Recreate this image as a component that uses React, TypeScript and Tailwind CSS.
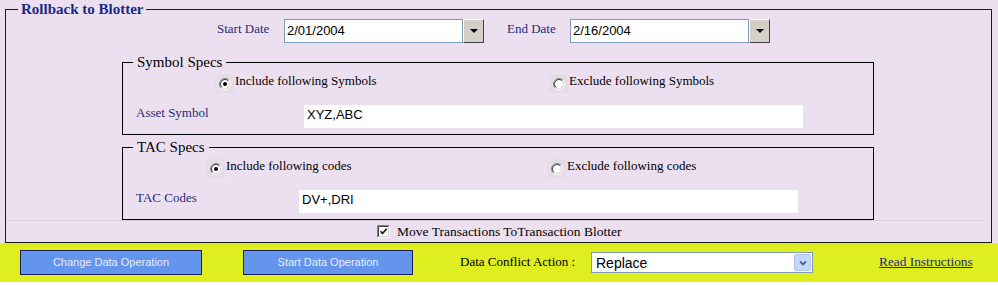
import React from "react";

function Radio({ checked }: { checked?: boolean }) {
  return (
    <div className="w-[19px] h-[19px] bg-[#E4DCE7] flex items-center justify-center shrink-0">
      <svg width="12" height="12" viewBox="0 0 12 12">
        <circle cx="6" cy="6" r="4.5" fill="#ffffff" />
        <path d="M2.111 9.889 A5.5 5.5 0 0 1 9.889 2.111" stroke="#808080" strokeWidth="1" fill="none" />
        <path d="M9.889 2.111 A5.5 5.5 0 0 1 2.111 9.889" stroke="#ffffff" strokeWidth="1" fill="none" />
        <path d="M2.818 9.182 A4.5 4.5 0 0 1 9.182 2.818" stroke="#404040" strokeWidth="1" fill="none" />
        <path d="M9.182 2.818 A4.5 4.5 0 0 1 2.818 9.182" stroke="#D4D0C8" strokeWidth="1" fill="none" />
        {checked && <circle cx="6" cy="6" r="2" fill="#000000" />}
      </svg>
    </div>
  );
}

function CheckBox() {
  return (
    <svg width="13" height="13" viewBox="0 0 13 13" className="shrink-0">
      <rect x="0" y="0" width="13" height="13" fill="#ffffff" />
      <path d="M0.5 12.5 V0.5 H12.5" stroke="#808080" fill="none" />
      <path d="M1.5 11.5 V1.5 H11.5" stroke="#404040" fill="none" />
      <path d="M0.5 12.5 H12.5 V0.5" stroke="#ffffff" fill="none" />
      <path d="M1.5 11.5 H11.5 V1.5" stroke="#D4D0C8" fill="none" />
      <path d="M3.5 6.2 L5.5 8.4 L9.7 3.9" stroke="#222222" strokeWidth="1.7" fill="none" />
    </svg>
  );
}

function DateBox({ value }: { value: string }) {
  return (
    <div className="flex w-[200px] h-[24px] shrink-0">
      <div className="flex-1 border border-[#7F9DB9] bg-white pl-[2px] pt-[3px] text-[13px] leading-[15px] font-['Liberation_Sans',sans-serif] text-black">
        {value}
      </div>
      <div className="w-[21px] h-[24px] bg-[#D4D0C8] border-t border-l border-t-[#ffffff] border-l-[#ffffff] border-r border-b border-r-[#404040] border-b-[#404040] flex items-center justify-center">
        <svg width="8" height="4" viewBox="0 0 8 4">
          <path d="M0 0 H8 L4 4 Z" fill="#000000" />
        </svg>
      </div>
    </div>
  );
}

function SelectBox() {
  return (
    <div className="mt-[2px] w-[222px] h-[21px] border border-[#7F9DB9] bg-white flex items-center shrink-0">
      <div className="flex-1 pl-[4px] text-[14px] leading-[16px] font-['Liberation_Sans',sans-serif] text-black">
        Replace
      </div>
      <div className="w-[17px] h-[17px] mr-[1px] bg-[#C6D5FB] border border-[#B3C4EC] rounded-[2px] flex items-center justify-center">
        <svg width="8" height="6" viewBox="0 0 8 6">
          <path d="M1 1.5 L4 4.5 L7 1.5" stroke="#4D6185" strokeWidth="1.8" fill="none" />
        </svg>
      </div>
    </div>
  );
}

export default function App() {
  return (
    <div className="w-[998px] h-[285px] bg-white overflow-hidden font-['Liberation_Serif',serif]">
      <div className="h-[243px] bg-[#ECE0F0] pl-[5px]">
        <fieldset className="w-[987px] h-[243px] border border-[#1a1a1a] m-0 p-0 min-w-0">
          <legend className="ml-[12px] px-[3px] leading-[19px] text-[15px] font-bold text-[#1a2a80]">
            Rollback to Blotter
          </legend>

          <div className="flex h-[24px]">
            <div className="ml-[211px] w-[67px] pt-[3px] text-[13px] leading-[13px] text-[#1f2a7c] shrink-0">
              Start Date
            </div>
            <DateBox value="2/01/2004" />
            <div className="ml-[23px] w-[63px] pt-[3px] text-[13px] leading-[13px] text-[#1f2a7c] shrink-0">
              End Date
            </div>
            <DateBox value="2/16/2004" />
          </div>

          <fieldset className="ml-[116px] mt-[9px] w-[752px] h-[83px] border border-black m-0 p-0 min-w-0">
            <legend className="ml-[10px] px-[4px] leading-[20px] text-[15px] text-black">Symbol Specs</legend>
            <div className="flex mt-[2px]">
              <div className="ml-[92px] w-[334px] flex items-start shrink-0">
                <Radio checked />
                <span className="ml-[1px] text-[13px] leading-[13px] text-black">Include following Symbols</span>
              </div>
              <div className="flex items-start">
                <Radio />
                <span className="ml-[1px] text-[13px] leading-[13px] text-black">Exclude following Symbols</span>
              </div>
            </div>
            <div className="flex mt-[12px]">
              <div className="ml-[13px] w-[168px] pt-[1px] text-[13px] leading-[13px] text-[#1f2a7c] shrink-0">
                Asset Symbol
              </div>
              <div className="w-[499px] h-[23px] bg-white pl-[3px] pt-[2px] text-[13px] leading-[15px] font-['Liberation_Sans',sans-serif] text-black">
                XYZ,ABC
              </div>
            </div>
          </fieldset>

          <fieldset className="ml-[116px] mt-[2px] w-[752px] h-[83px] border border-black m-0 p-0 min-w-0">
            <legend className="ml-[10px] px-[4px] leading-[20px] text-[15px] text-black">TAC Specs</legend>
            <div className="flex mt-[2px]">
              <div className="ml-[83px] w-[341px] flex items-start shrink-0">
                <Radio checked />
                <span className="ml-[1px] text-[13px] leading-[13px] text-black">Include following codes</span>
              </div>
              <div className="flex items-start">
                <Radio />
                <span className="ml-[1px] text-[13px] leading-[13px] text-black">Exclude following codes</span>
              </div>
            </div>
            <div className="flex mt-[12px]">
              <div className="ml-[13px] w-[163px] pt-[1px] text-[13px] leading-[13px] text-[#1f2a7c] shrink-0">
                TAC Codes
              </div>
              <div className="w-[499px] h-[23px] bg-white pl-[3px] pt-[2px] text-[13px] leading-[15px] font-['Liberation_Sans',sans-serif] text-black">
                DV+,DRI
              </div>
            </div>
          </fieldset>

          <div className="ml-[1px] w-[977px] h-px bg-[#DACCDA]" />

          <div className="flex items-start mt-[4px]">
            <div className="ml-[371px]">
              <CheckBox />
            </div>
            <span className="ml-[7px] text-[13.5px] leading-[13px] text-black">
              Move Transactions ToTransaction Blotter
            </span>
          </div>
        </fieldset>
      </div>

      <div className="h-[39px] bg-[#DFEE1E] flex items-start pt-[7px]">
        <button className="ml-[20px] w-[182px] h-[25px] bg-[#6495ED] border border-[#1E1E5C] text-[11px] leading-[13px] text-[#E6ECFA] font-['Liberation_Sans',sans-serif] shrink-0">
          Change Data Operation
        </button>
        <button className="ml-[41px] w-[170px] h-[25px] bg-[#6495ED] border border-[#1E1E5C] text-[11px] leading-[13px] text-[#E6ECFA] font-['Liberation_Sans',sans-serif] shrink-0">
          Start Data Operation
        </button>
        <div className="ml-[47px] w-[131px] mt-[5px] text-[13px] leading-[13px] text-black shrink-0">
          Data Conflict Action :
        </div>
        <SelectBox />
        <a className="ml-[66px] mt-[5px] text-[13.33px] leading-[13px] text-[#1f2a7c] underline cursor-pointer">
          Read Instructions
        </a>
      </div>
    </div>
  );
}
